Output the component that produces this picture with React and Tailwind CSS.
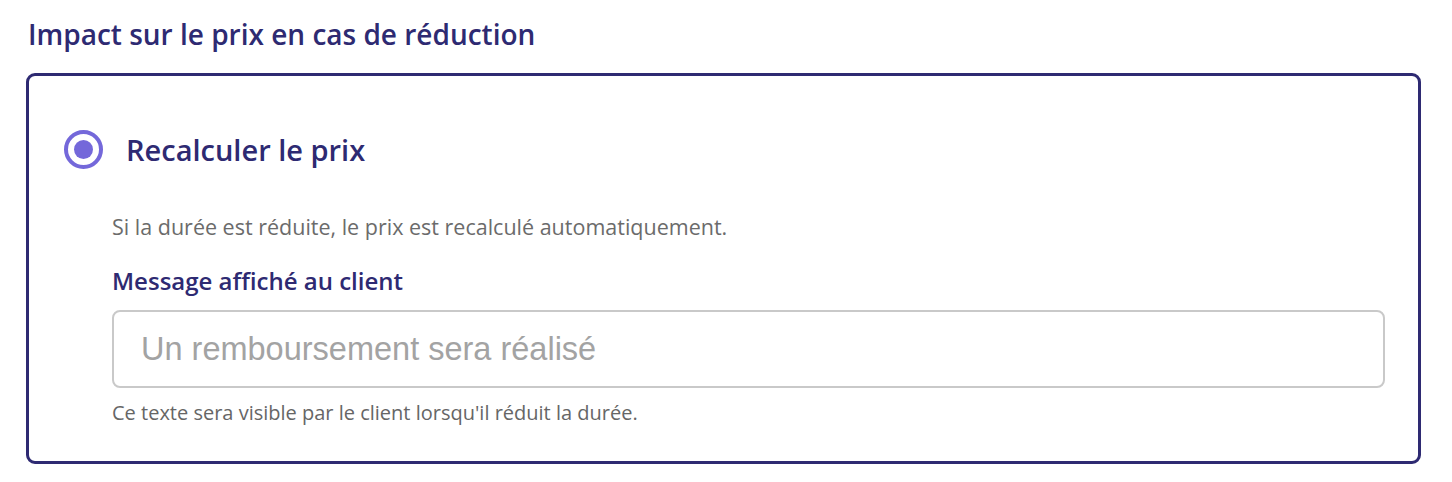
import React from "react";

const RadioDot = () => (
  <span className="flex items-center justify-center w-[39px] h-[39px] rounded-full border-[4px] border-[#7468da] bg-white">
    <span className="w-[19px] h-[19px] rounded-full bg-[#7468da]" />
  </span>
);

export default function App() {
  return (
    <div
      className="w-[1452px] h-[482px] bg-white pl-[26px] pr-[31px] pt-[17px]"
      style={{ fontFamily: "'Open Sans', Lato, sans-serif" }}
    >
      <h2 className="pl-[2px] text-[28px] leading-[34px] font-semibold text-[#2e2a72]">
        Impact sur le prix en cas de réduction
      </h2>
      <div className="mt-[22px] border-[3px] border-[#2e2a72] rounded-[9px] pl-[35px] pr-[33px] pt-[54px] pb-[37px]">
        <label className="flex items-center gap-[23px]">
          <RadioDot />
          <span className="text-[29px] leading-[34px] font-semibold text-[#2e2a72]">
            Recalculer le prix
          </span>
        </label>
        <div className="pl-[48px] mt-[46px]">
          <p className="text-[21.5px] leading-[24px] text-[#6b6b6b]">
            Si la durée est réduite, le prix est recalculé automatiquement.
          </p>
          <p className="mt-[28px] text-[24px] leading-[28px] font-semibold text-[#2e2a72]">
            Message affiché au client
          </p>
          <input
            type="text"
            placeholder="Un remboursement sera réalisé"
            className="mt-[15px] block w-full h-[78px] px-[27px] border-2 border-[#c9c9c9] rounded-[8px] text-[32.5px] text-[#333] placeholder:text-[#a3a3a3] outline-none"
            style={{ fontFamily: "'Liberation Sans', Arial, sans-serif" }}
          />
          <p className="mt-[14px] text-[20px] leading-[22px] text-[#666]">
            Ce texte sera visible par le client lorsqu'il réduit la durée.
          </p>
        </div>
      </div>
    </div>
  );
}
